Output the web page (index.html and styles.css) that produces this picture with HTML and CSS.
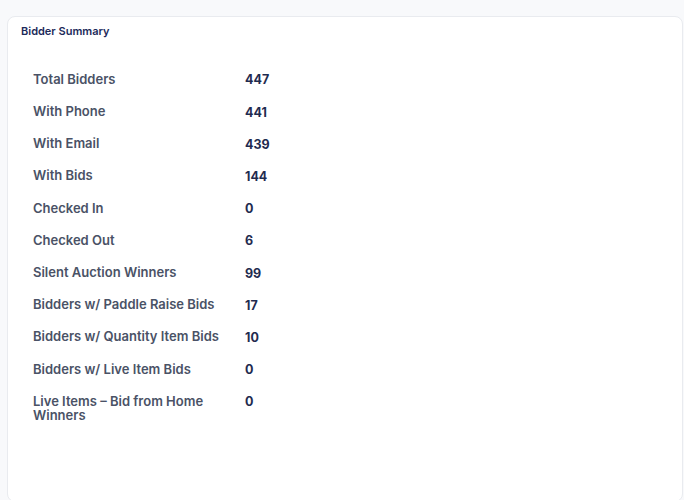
FILE: index.html
```html
<!DOCTYPE html>
<html lang="en">
<head>
<meta charset="utf-8">
<title>Bidder Summary</title>
<link rel="stylesheet" href="styles.css">
</head>
<body>
<section class="card">
  <h2 class="card-title">Bidder Summary</h2>
  <div class="summary">
    <div class="row"><span class="label">Total Bidders</span><span class="value">447</span></div>
    <div class="row"><span class="label">With Phone</span><span class="value">441</span></div>
    <div class="row"><span class="label">With Email</span><span class="value">439</span></div>
    <div class="row"><span class="label">With Bids</span><span class="value">144</span></div>
    <div class="row"><span class="label">Checked In</span><span class="value">0</span></div>
    <div class="row"><span class="label">Checked Out</span><span class="value">6</span></div>
    <div class="row"><span class="label">Silent Auction Winners</span><span class="value">99</span></div>
    <div class="row"><span class="label">Bidders w/ Paddle Raise Bids</span><span class="value">17</span></div>
    <div class="row"><span class="label">Bidders w/ Quantity Item Bids</span><span class="value">10</span></div>
    <div class="row"><span class="label">Bidders w/ Live Item Bids</span><span class="value">0</span></div>
    <div class="row"><span class="label">Live Items – Bid from Home Winners</span><span class="value">0</span></div>
  </div>
</section>
</body>
</html>
```
FILE: styles.css
```css
html, body {
  margin: 0;
  padding: 0;
  background: #f8f9fb;
  font-family: Inter, "Noto Sans", "Liberation Sans", sans-serif;
}

body {
  padding: 16px 1px 0 7px;
  height: 500px;
  box-sizing: border-box;
  overflow: hidden;
}

.card {
  background: #ffffff;
  border: 1px solid #e9ebef;
  border-radius: 8px;
  height: 486px;
  box-sizing: border-box;
  padding: 5px 13px 0 13px;
}

.card-title {
  margin: 0;
  font-size: 11px;
  line-height: 18px;
  font-weight: 600;
  color: #1c2a5a;
}

.summary {
  margin-top: 23px;
  padding-left: 12px;
}

.row {
  display: grid;
  grid-template-columns: 212px auto;
  align-items: start;
  padding: 8.9px 0;
}

.label {
  font-size: 13px;
  line-height: 14.4px;
  font-weight: 600;
  color: #4a5266;
  padding-right: 14px;
}

.value {
  font-size: 12.5px;
  line-height: 14.4px;
  font-weight: 700;
  color: #1f2b4f;
  margin-top: 1.5px;
  margin-bottom: -1.5px;
}
```
